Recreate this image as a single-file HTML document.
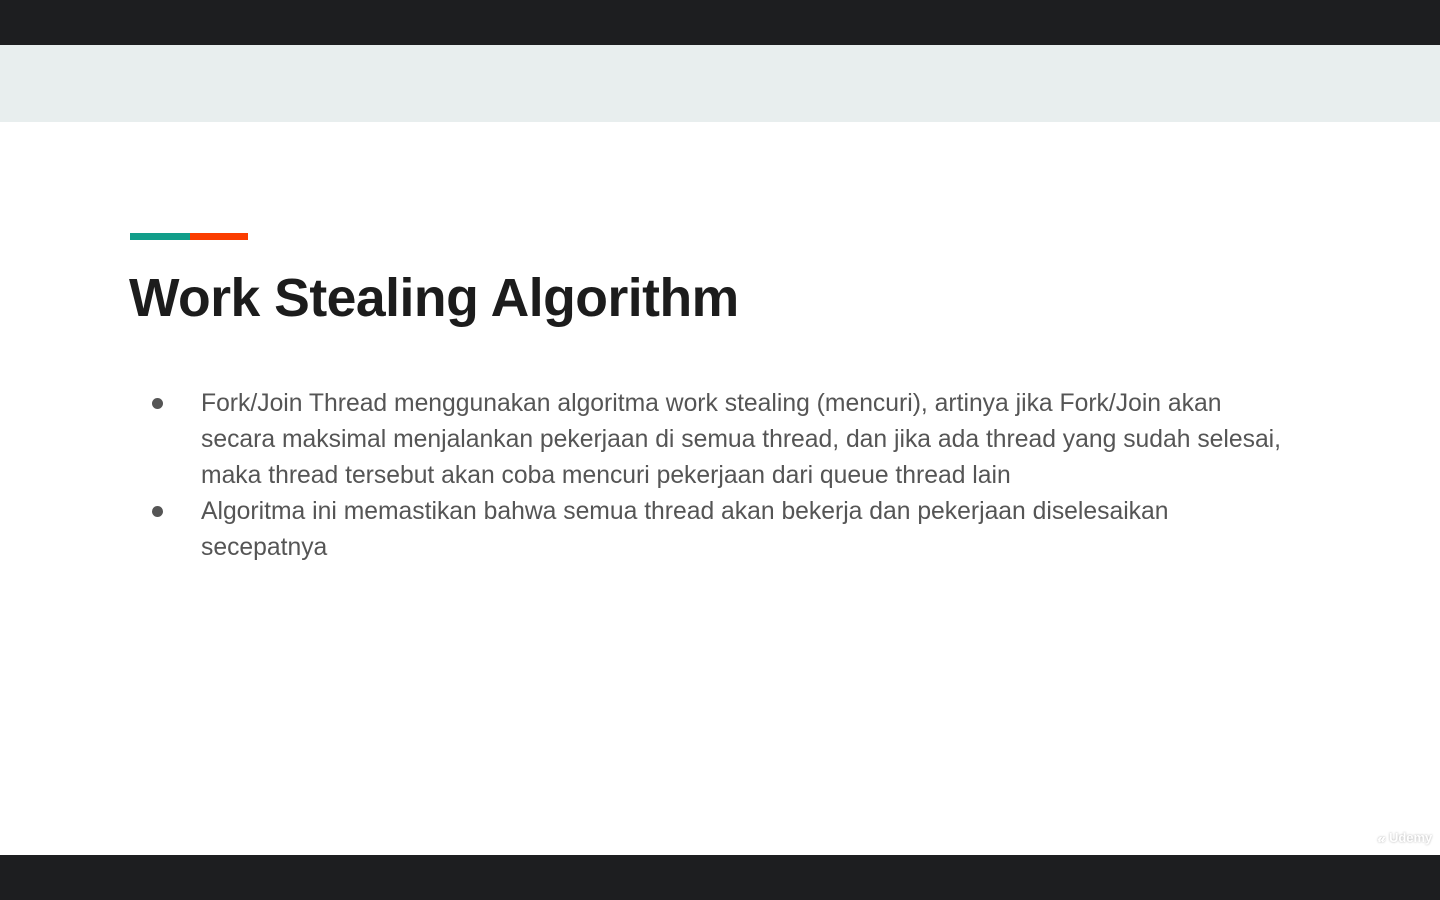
<!DOCTYPE html>
<html><head><meta charset="utf-8"><style>
*{margin:0;padding:0;box-sizing:border-box}
body{width:1440px;height:900px;position:relative;background:#fff;overflow:hidden;font-family:"Liberation Sans",sans-serif}
.top{position:absolute;left:0;top:0;width:1440px;height:45px;background:#1d1e20}
.band{position:absolute;left:0;top:45px;width:1440px;height:77px;background:#e8eeee}
.bot{position:absolute;left:0;top:855px;width:1440px;height:45px;background:#1d1e20}
.bar1{position:absolute;left:130px;top:233px;width:60px;height:7px;background:#119e8a}
.bar2{position:absolute;left:190px;top:233px;width:58px;height:7px;background:#fb3d00}
h1{position:absolute;left:129px;top:267px;font-size:53.5px;font-weight:bold;color:#1c1c1c;letter-spacing:-0.5px;line-height:64px;white-space:nowrap}
.t{position:absolute;left:201px;font-size:24.7px;color:#555;line-height:36px;white-space:nowrap}
.d{position:absolute;left:152px;width:11px;height:11px;border-radius:50%;background:#555}
.logo{position:absolute;left:1378px;top:830px;color:#fff;font-size:13px;font-weight:bold;text-shadow:0 0 2px #aaa}
</style></head><body>
<div class="top"></div><div class="band"></div><div class="bot"></div>
<div class="bar1"></div><div class="bar2"></div>
<h1>Work Stealing Algorithm</h1>
<div class="d" style="top:398px"></div>
<div class="t" style="top:386px">Fork/Join Thread menggunakan algoritma work stealing (mencuri), artinya jika Fork/Join akan<br>secara maksimal menjalankan pekerjaan di semua thread, dan jika ada thread yang sudah selesai,<br>maka thread tersebut akan coba mencuri pekerjaan dari queue thread lain</div>
<div class="d" style="top:506px"></div>
<div class="t" style="top:494px">Algoritma ini memastikan bahwa semua thread akan bekerja dan pekerjaan diselesaikan<br>secepatnya</div>
<div class="logo">𝓊 Udemy</div>
</body></html>
